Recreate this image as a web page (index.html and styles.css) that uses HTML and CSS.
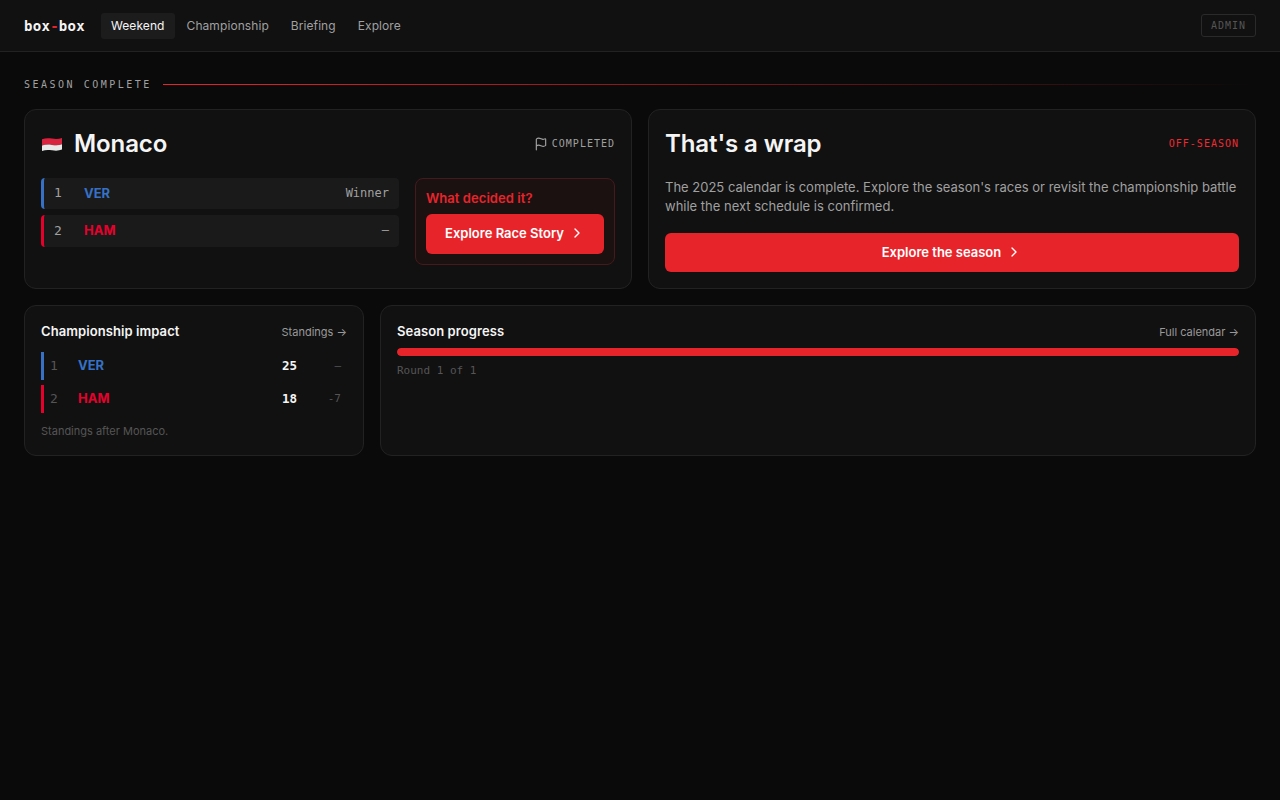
FILE: index.html
```html
<!DOCTYPE html>
<html lang="en">
<head>
    <meta charset="UTF-8">
    <meta name="viewport" content="width=device-width, initial-scale=1.0">
    <title>box-box</title>
    <link rel="stylesheet" href="styles.css">
</head>
<body>
    <header class="topbar">
        <div class="logo">box<span class="logo-dash">-</span>box</div>
        <nav class="nav">
            <a class="nav-link active">Weekend</a>
            <a class="nav-link">Championship</a>
            <a class="nav-link">Briefing</a>
            <a class="nav-link">Explore</a>
        </nav>
        <a class="admin">ADMIN</a>
    </header>

    <main class="page">
        <div class="section-label">
            <span class="section-text">SEASON COMPLETE</span>
            <span class="section-line"></span>
        </div>

        <div class="row-top">
            <section class="card">
                <div class="card-head">
                    <div class="race-title">
                        <svg class="flag" viewBox="0 0 22 16" width="22" height="16">
                            <path d="M1 3.200c3-1 6-1.200 10-.6s7 .4 10-.7v6.400c-3 1-6 1.200-10 .6s-7-.4-10 .7z" fill="#d9233f"/>
                            <path d="M1 9.600c3-1.100 6-1.300 10-.7s7 .4 10-.6v5.300c-3 1.100-6 1.300-10 .7s-7-.4-10 .6z" fill="#e8e8e8"/>
                        </svg>
                        <h2 class="big-title">Monaco</h2>
                    </div>
                    <div class="status">
                        <svg class="status-icon" viewBox="0 0 24 24" width="14" height="14"><path d="M4 22V4a1 1 0 0 1 .4-.8A6 6 0 0 1 8 2c3 0 5 2 7.333 2q2 0 3.067-.8A1 1 0 0 1 20 4v10a1 1 0 0 1-.4.8A6 6 0 0 1 16 16c-3 0-5-2-8-2a6 6 0 0 0-4 1.528"/></svg>
                        <span>COMPLETED</span>
                    </div>
                </div>
                <div class="race-body">
                    <div class="results">
                        <div class="result result-ver">
                            <span class="result-pos">1</span>
                            <span class="driver ver">VER</span>
                            <span class="result-note">Winner</span>
                        </div>
                        <div class="result result-ham">
                            <span class="result-pos">2</span>
                            <span class="driver ham">HAM</span>
                            <span class="result-note">—</span>
                        </div>
                    </div>
                    <div class="decided">
                        <div class="decided-title">What decided it?</div>
                        <a class="red-btn story-btn">Explore Race Story
                            <svg class="chevron" viewBox="0 0 24 24" width="16" height="16"><path d="m9 18 6-6-6-6"/></svg>
                        </a>
                    </div>
                </div>
            </section>

            <section class="card">
                <div class="card-head">
                    <h2 class="big-title">That's a wrap</h2>
                    <span class="off-season">OFF-SEASON</span>
                </div>
                <p class="wrap-text">The 2025 calendar is complete. Explore the season's races or revisit the championship battle while the next schedule is confirmed.</p>
                <a class="red-btn season-btn">Explore the season
                    <svg class="chevron" viewBox="0 0 24 24" width="16" height="16"><path d="m9 18 6-6-6-6"/></svg>
                </a>
            </section>
        </div>

        <div class="row-bottom">
            <section class="card">
                <div class="small-head standings-head">
                    <h3 class="small-title">Championship impact</h3>
                    <a class="more">Standings →</a>
                </div>
                <div class="standing standing-ver">
                    <span class="standing-pos">1</span>
                    <span class="driver ver">VER</span>
                    <span class="points">25</span>
                    <span class="gap">—</span>
                </div>
                <div class="standing standing-ham">
                    <span class="standing-pos">2</span>
                    <span class="driver ham">HAM</span>
                    <span class="points">18</span>
                    <span class="gap">-7</span>
                </div>
                <p class="foot-note">Standings after Monaco.</p>
            </section>

            <section class="card">
                <div class="small-head">
                    <h3 class="small-title">Season progress</h3>
                    <a class="more">Full calendar →</a>
                </div>
                <div class="progress"><div class="progress-fill" style="width: 100%"></div></div>
                <div class="round">Round 1 of 1</div>
            </section>
        </div>
    </main>
</body>
</html>
```

FILE: styles.css
```css
* {
    box-sizing: border-box;
}
body {
    margin: 0;
    min-height: 800px;
    background-color: #0a0a0a;
    color: #f5f5f5;
    font-family: Inter, "Liberation Sans", sans-serif;
}
h2, h3, p {
    margin: 0;
}
.topbar {
    display: flex;
    align-items: center;
    height: 52px;
    padding: 0 24px;
    background-color: #111111;
    border-bottom: 1px solid #222222;
}
.logo {
    font-family: "DejaVu Sans Mono", monospace;
    font-size: 14px;
    font-weight: 700;
    color: #f5f5f5;
    margin-right: 16px;
    width: 61px;
    letter-spacing: 0.28px;
}
.logo-dash {
    color: #e8242b;
}
.nav {
    display: flex;
    gap: 2px;
}
.nav-link {
    padding: 0 10px;
    height: 26px;
    line-height: 26px;
    font-size: 12px;
    letter-spacing: 0.08px;
    color: #a0a0a0;
    border-radius: 3px;
}
.active {
    background-color: #1c1c1c;
    color: #f5f5f5;
}
.admin {
    margin-left: auto;
    width: 55px;
    height: 23px;
    line-height: 21px;
    text-align: center;
    font-family: "DejaVu Sans Mono", monospace;
    font-size: 10px;
    letter-spacing: 1px;
    color: #555555;
    border: 1px solid #2a2a2a;
    border-radius: 3px;
}
.page {
    padding: 24px;
}
.section-label {
    display: flex;
    align-items: center;
    gap: 11px;
    height: 16px;
    margin-bottom: 17px;
}
.section-text {
    font-family: "DejaVu Sans Mono", monospace;
    font-size: 10px;
    letter-spacing: 2.5px;
    color: #a0a0a0;
}
.section-line {
    flex: 1;
    height: 1px;
    background: linear-gradient(to right, #e8242b, transparent);
}
.row-top {
    display: grid;
    grid-template-columns: 1fr 1fr;
    gap: 16px;
    margin-bottom: 16px;
}
.row-bottom {
    display: grid;
    grid-template-columns: 340px 1fr;
    gap: 16px;
}
.card {
    background-color: #111111;
    border: 1px solid #222222;
    border-radius: 12px;
    padding: 16px;
}
.row-top .card {
    height: 180px;
}
.row-bottom .card {
    height: 151px;
}
.card-head {
    display: flex;
    align-items: center;
    justify-content: space-between;
    height: 35px;
}
.race-title {
    display: flex;
    align-items: center;
    gap: 11px;
}
.big-title {
    font-size: 24px;
    font-weight: 600;
    letter-spacing: -0.1px;
    color: #f5f5f5;
}
.status {
    display: flex;
    align-items: center;
    gap: 4px;
    font-family: "DejaVu Sans Mono", monospace;
    font-size: 10px;
    letter-spacing: 1px;
    color: #a0a0a0;
}
.status-icon {
    fill: none;
    stroke: #a0a0a0;
    stroke-width: 2;
    stroke-linecap: round;
    stroke-linejoin: round;
}
.race-body {
    display: flex;
    gap: 16px;
    margin-top: 17px;
}
.results {
    flex: 1;
    display: flex;
    flex-direction: column;
    gap: 6px;
}
.result {
    display: flex;
    align-items: center;
    height: 31px;
    padding: 0 10px 2px;
    background-color: #1a1a1a;
    border-left: 3px solid;
    border-radius: 4px;
}
.result-ham {
    height: 32px;
}
.result-ver {
    border-left-color: #3671c6;
}
.result-ham {
    border-left-color: #e8002d;
}
.result-pos {
    width: 30px;
    font-family: "DejaVu Sans Mono", monospace;
    font-size: 13px;
    color: #a0a0a0;
}
.driver {
    font-size: 13px;
    font-weight: 700;
}
.ver {
    color: #3671c6;
}
.ham {
    color: #e8002d;
}
.result-note {
    margin-left: auto;
    font-family: "DejaVu Sans Mono", monospace;
    font-size: 12px;
    color: #a0a0a0;
}
.decided {
    width: 200px;
    height: 87px;
    padding: 11px 10px;
    background-color: #1c1111;
    border: 1px solid #451a1c;
    border-radius: 8px;
}
.decided-title {
    font-size: 13px;
    font-weight: 600;
    letter-spacing: 0.06px;
    line-height: 16px;
    color: #e8242b;
    margin-bottom: 8px;
}
.red-btn {
    display: flex;
    align-items: center;
    justify-content: center;
    gap: 5px;
    padding-bottom: 1px;
    background-color: #e8242b;
    color: #ffffff;
    font-size: 13px;
    font-weight: 600;
    border-radius: 6px;
}
.story-btn {
    height: 40px;
    padding-bottom: 2px;
}
.season-btn {
    height: 39px;
}
.chevron {
    fill: none;
    stroke: #ffffff;
    stroke-width: 2;
    stroke-linecap: round;
    stroke-linejoin: round;
}
.off-season {
    font-family: "DejaVu Sans Mono", monospace;
    font-size: 10px;
    letter-spacing: 1px;
    color: #ef2a31;
}
.wrap-text {
    margin-top: 17px;
    margin-bottom: 17px;
    font-size: 13px;
    line-height: 19px;
    color: #a0a0a0;
}
.small-head {
    display: flex;
    align-items: center;
    justify-content: space-between;
    height: 18px;
    margin-bottom: 8px;
}
.standings-head {
    margin-bottom: 12px;
}
.small-title {
    font-size: 13px;
    letter-spacing: 0.08px;
    font-weight: 600;
    color: #f5f5f5;
}
.more {
    padding-top: 2px;
    font-size: 11px;
    color: #999999;
}
.standing {
    display: flex;
    align-items: center;
    height: 28px;
    margin-bottom: 5px;
    padding-left: 6px;
    padding-bottom: 2px;
    border-left: 3px solid;
}
.standing-ver {
    border-left-color: #3671c6;
}
.standing-ham {
    border-left-color: #e8002d;
}
.standing-pos {
    width: 28px;
    font-family: "DejaVu Sans Mono", monospace;
    font-size: 13px;
    color: #555555;
}
.points {
    margin-left: auto;
    font-family: "DejaVu Sans Mono", monospace;
    font-size: 12.500px;
    font-weight: 700;
    color: #f5f5f5;
}
.gap {
    width: 50px;
    padding-right: 6px;
    text-align: right;
    font-family: "DejaVu Sans Mono", monospace;
    font-size: 11px;
    color: #555555;
}
.foot-note {
    margin-top: 11px;
    font-size: 11px;
    color: #555555;
}
.progress {
    height: 8px;
    background-color: #1c1c1c;
    border-radius: 4px;
    overflow: hidden;
}
.progress-fill {
    height: 100%;
    background-color: #e8242b;
    border-radius: 4px;
}
.round {
    margin-top: 8px;
    font-family: "DejaVu Sans Mono", monospace;
    font-size: 11px;
    color: #555555;
}
```
